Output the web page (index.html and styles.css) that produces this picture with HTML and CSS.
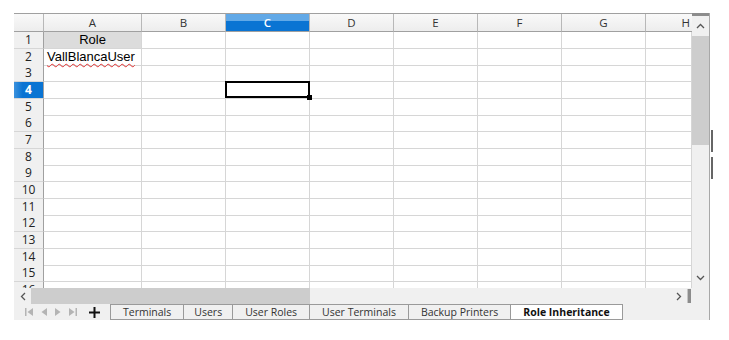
FILE: index.html
```html
<!DOCTYPE html>
<html lang="en">
<head>
  <meta charset="UTF-8" />
  <title>Spreadsheet - Role Inheritance</title>
  <link rel="stylesheet" href="styles.css">
</head>
<body>
  <main class="sheet">
    <section class="grid" aria-label="Cells">
      <div class="row head">
        <div class="corner"></div><div>A</div><div>B</div><div class="sel">C</div><div>D</div><div>E</div><div>F</div><div>G</div><div class="clip">H</div>
      </div>
      <div class="row"><div class="rh">1</div><div class="title">Role</div><div></div><div></div><div></div><div></div><div></div><div></div><div></div></div>
      <div class="row"><div class="rh">2</div><div class="txt"><span class="spell">VallBlancaUser</span></div><div></div><div></div><div></div><div></div><div></div><div></div><div></div></div>
      <div class="row"><div class="rh">3</div><div></div><div></div><div></div><div></div><div></div><div></div><div></div><div></div></div>
      <div class="row"><div class="rh sel">4</div><div></div><div></div><div class="cursor"></div><div></div><div></div><div></div><div></div><div></div></div>
      <div class="row"><div class="rh">5</div><div></div><div></div><div></div><div></div><div></div><div></div><div></div><div></div></div>
      <div class="row"><div class="rh">6</div><div></div><div></div><div></div><div></div><div></div><div></div><div></div><div></div></div>
      <div class="row"><div class="rh">7</div><div></div><div></div><div></div><div></div><div></div><div></div><div></div><div></div></div>
      <div class="row"><div class="rh">8</div><div></div><div></div><div></div><div></div><div></div><div></div><div></div><div></div></div>
      <div class="row"><div class="rh">9</div><div></div><div></div><div></div><div></div><div></div><div></div><div></div><div></div></div>
      <div class="row"><div class="rh">10</div><div></div><div></div><div></div><div></div><div></div><div></div><div></div><div></div></div>
      <div class="row"><div class="rh">11</div><div></div><div></div><div></div><div></div><div></div><div></div><div></div><div></div></div>
      <div class="row"><div class="rh">12</div><div></div><div></div><div></div><div></div><div></div><div></div><div></div><div></div></div>
      <div class="row"><div class="rh">13</div><div></div><div></div><div></div><div></div><div></div><div></div><div></div><div></div></div>
      <div class="row"><div class="rh">14</div><div></div><div></div><div></div><div></div><div></div><div></div><div></div><div></div></div>
      <div class="row"><div class="rh">15</div><div></div><div></div><div></div><div></div><div></div><div></div><div></div><div></div></div>
      <div class="row"><div class="rh">16</div><div></div><div></div><div></div><div></div><div></div><div></div><div></div><div></div></div>
    </section>

    <div class="vscroll" aria-hidden="true">
      <div class="vs-cap"></div>
      <div class="vs-btn">
        <svg width="9" height="6" viewBox="0 0 9 6"><path d="M1 5 L4.5 1.5 L8 5" fill="none" stroke="#555" stroke-width="1.3"/></svg>
      </div>
      <div class="vs-thumb"></div>
      <div class="vs-track"></div>
      <div class="vs-btn">
        <svg width="9" height="6" viewBox="0 0 9 6"><path d="M1 1 L4.5 4.5 L8 1" fill="none" stroke="#555" stroke-width="1.3"/></svg>
      </div>
    </div>

    <div class="hscroll" aria-hidden="true">
      <div class="hs-btn">
        <svg width="6" height="9" viewBox="0 0 6 9"><path d="M5 1 L1.5 4.5 L5 8" fill="none" stroke="#555" stroke-width="1.3"/></svg>
      </div>
      <div class="hs-thumb"></div>
      <div class="hs-track"></div>
      <div class="hs-btn">
        <svg width="6" height="9" viewBox="0 0 6 9"><path d="M1 1 L4.5 4.5 L1 8" fill="none" stroke="#555" stroke-width="1.3"/></svg>
      </div>
      <div class="hs-split"></div>
    </div>
    <div class="corner-fill"></div>

    <nav class="tabbar" aria-label="Sheets">
      <div class="tab-nav">
        <svg width="8" height="8" viewBox="0 0 8 8"><rect x="0" y="0" width="1.5" height="8" fill="#b4b4b4"/><path d="M8 0 L2.5 4 L8 8 Z" fill="#b4b4b4"/></svg>
        <svg width="6" height="8" viewBox="0 0 6 8"><path d="M6 0 L0.5 4 L6 8 Z" fill="#b4b4b4"/></svg>
        <svg width="6" height="8" viewBox="0 0 6 8"><path d="M0 0 L5.5 4 L0 8 Z" fill="#b4b4b4"/></svg>
        <svg width="8" height="8" viewBox="0 0 8 8"><path d="M0 0 L5.5 4 L0 8 Z" fill="#b4b4b4"/><rect x="6.5" y="0" width="1.5" height="8" fill="#b4b4b4"/></svg>
        <svg class="add" width="11" height="11" viewBox="0 0 11 11"><rect x="4.5" y="0" width="2" height="11" fill="#111"/><rect x="0" y="4.5" width="11" height="2" fill="#111"/></svg>
      </div>
      <ul class="tabs">
        <li>Terminals</li>
        <li>Users</li>
        <li>User Roles</li>
        <li>User Terminals</li>
        <li>Backup Printers</li>
        <li class="active">Role Inheritance</li>
      </ul>
    </nav>

    <span class="edge-mark top" aria-hidden="true"></span>
    <span class="edge-mark bottom" aria-hidden="true"></span>
  </main>
</body>
</html>
```

FILE: styles.css
```css
body {
  margin: 0;
  background: #ffffff;
  font-family: "Open Sans", "DejaVu Sans", sans-serif;
  color: #333;
}

.sheet {
  position: relative;
  margin: 13px 0 0 14px;
  width: 695px;
  display: grid;
  grid-template-columns: 678px 17px;
  grid-template-rows: 275px 16px 16px;
  background: #f0f0f0;
  border-right: 1px solid #a8a8a8;
}

/* cell grid */
.grid { overflow: hidden; background: #fff; }
.row {
  display: grid;
  grid-template-columns: 30px 98px repeat(6, 84px) 46px;
  height: 17px;
}
.row:nth-child(3n) { height: 16px; }
.row > div {
  box-sizing: border-box;
  border-right: 1px solid #d6d6d6;
  border-bottom: 1px solid #d6d6d6;
}
.row.head {
  box-sizing: border-box;
  height: 19px;
  border-top: 1px solid #a0a0a0;
}
.row.head > div {
  background: linear-gradient(#f9f9f9, #ededed);
  border-right-color: #b8b8b8;
  border-bottom-color: #a0a0a0;
  font-size: 11.5px;
  line-height: 17px;
  text-align: center;
  color: #333;
}
.row.head > div.clip { text-align: right; padding-right: 2px; border-right: 0; }
.row.head > div.sel {
  background: linear-gradient(#62a9e7 0, #62a9e7 40%, #0a74d3 40%);
  color: #fff;
  font-weight: 600;
}
.row .rh {
  background: #f0f0f0;
  border-right-color: #a0a0a0;
  font-size: 12px;
  line-height: 16px;
  text-align: center;
  color: #222;
}
.row .rh.sel {
  background: linear-gradient(90deg, #3d92dd, #0a74d3 30%);
  color: #fff;
  font-weight: 700;
}

.title, .txt {
  font-family: "Liberation Sans", Arial, sans-serif;
  font-size: 13px;
  line-height: 16px;
  color: #000;
  white-space: nowrap;
}
.title { background: #dcdcdc; text-align: center; }
.txt { padding-left: 3px; }
.spell { text-decoration: underline wavy #e03030; text-decoration-thickness: 1px; text-underline-offset: 2px; }

.cursor { position: relative; }
.cursor::after {
  content: "";
  position: absolute;
  left: -1px; top: -1px; right: -1px; bottom: 0;
  border: 2px solid #000;
}
.cursor::before {
  content: "";
  position: absolute;
  right: -3px; bottom: -2px;
  width: 5px; height: 5px;
  background: #000;
  z-index: 1;
}

/* scrollbars */
.vscroll {
  display: flex;
  flex-direction: column;
  background: #f0f0f0;
}
.vs-cap { height: 3px; background: #8c8c8c; }
.vs-btn { height: 20px; display: flex; align-items: center; justify-content: center; }
.vs-thumb { height: 109px; background: #cdcdcd; }
.vs-track { flex: 1; }

.hscroll {
  display: flex;
  align-items: stretch;
  background: #f0f0f0;
}
.hs-btn { width: 17px; display: flex; align-items: center; justify-content: center; }
.hs-thumb { width: 279px; background: #cdcdcd; }
.hs-track { flex: 1; }
.hs-split { width: 3px; margin: 1px 1px 1px 0; background: #8c8c8c; border-left: 1px solid #c4c4c4; }
.corner-fill { background: #f0f0f0; }

/* sheet tabs */
.tabbar {
  grid-column: 1 / -1;
  display: flex;
  align-items: stretch;
  background: #f0f0f0;
}
.tab-nav {
  width: 96px;
  display: flex;
  align-items: center;
  gap: 8px;
  padding-left: 11px;
  box-sizing: border-box;
}
.tab-nav .add { margin-left: 4px; }
.tabs {
  display: flex;
  margin: 0;
  padding: 0;
  list-style: none;
}
.tabs li {
  box-sizing: border-box;
  padding: 0 12px;
  border: 1px solid #9a9a9a;
  border-left: 0;
  background: #f0f0f0;
  font-size: 10.5px;
  line-height: 14px;
  text-align: center;
  color: #333;
  white-space: nowrap;
}
.tabs li:first-child { border-left: 1px solid #9a9a9a; }
.tabs li:nth-child(2) { padding: 0 10px; }
.tabs li.active { background: #fff; font-weight: 700; color: #111; }

.edge-mark {
  position: absolute;
  right: -4px;
  width: 2px;
  background: #666;
}
.edge-mark.top { top: 117px; height: 22px; }
.edge-mark.bottom { top: 144px; height: 22px; }
```
